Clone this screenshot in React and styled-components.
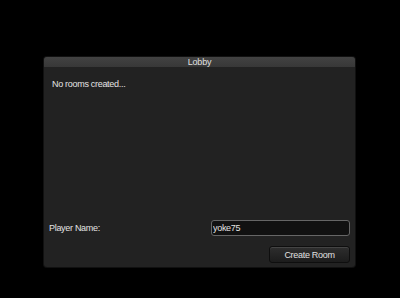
import React from "react";
import styled, { createGlobalStyle } from "styled-components";

const Global = createGlobalStyle`
  html, body { margin: 0; padding: 0; background: #000; }
  body { font-family: "Liberation Sans", Arial, sans-serif; }
`;

const Page = styled.div`
  width: 400px;
  height: 298px;
  box-sizing: border-box;
  padding: 57px 45px 31px 44px;
  display: flex;
`;

const Window = styled.div`
  flex: 1;
  display: flex;
  flex-direction: column;
  background: #222222;
  border-radius: 3px;
  overflow: hidden;
  box-shadow: 0 0 0 1px #111;
`;

const TitleBar = styled.div`
  height: 10px;
  background: linear-gradient(#424242, #383838);
  color: #e0e0e0;
  font-size: 9px;
  letter-spacing: -0.2px;
  line-height: 10px;
  text-align: center;
`;

const Body = styled.div`
  flex: 1;
  display: flex;
  flex-direction: column;
  padding: 12px 5px 4px 5px;
`;

const Message = styled.div`
  color: #e4e4e4;
  font-size: 9px;
  letter-spacing: -0.3px;
  line-height: 11px;
  padding-left: 3px;
  flex: 1;
`;

const Row = styled.div`
  display: flex;
  align-items: center;
  justify-content: space-between;
  margin-bottom: ${(p) => p.$mb || 0}px;
`;

const Label = styled.span`
  color: #e4e4e4;
  font-size: 9px;
  letter-spacing: -0.3px;
`;

const Input = styled.input`
  width: 139px;
  height: 16px;
  box-sizing: border-box;
  background: #111;
  border: 1px solid #666;
  border-radius: 3px;
  color: #e4e4e4;
  font-family: "Liberation Sans", Arial, sans-serif;
  font-size: 9px;
  letter-spacing: -0.3px;
  padding: 0 1px;
  outline: none;
`;

const Button = styled.button`
  margin-left: auto;
  width: 81px;
  height: 17px;
  box-sizing: border-box;
  background: linear-gradient(#2e2e2e, #1c1c1c);
  border: 1px solid #0e0e0e;
  border-radius: 3px;
  color: #e0e0e0;
  font-family: "Liberation Sans", Arial, sans-serif;
  font-size: 9px;
  letter-spacing: -0.3px;
  padding: 0;
  box-shadow: inset 0 1px 0 #444;
`;

export default function App() {
  return (
    <>
      <Global />
      <Page>
        <Window>
          <TitleBar>Lobby</TitleBar>
          <Body>
            <Message>No rooms created...</Message>
            <Row $mb={10}>
              <Label>Player Name:</Label>
              <Input defaultValue="yoke75" />
            </Row>
            <Row>
              <Button>Create Room</Button>
            </Row>
          </Body>
        </Window>
      </Page>
    </>
  );
}
